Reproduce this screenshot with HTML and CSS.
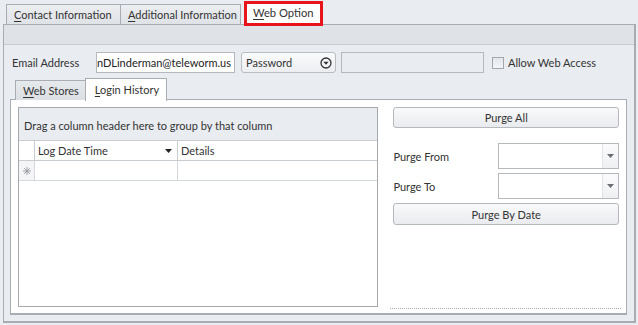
FILE: index.html
```html
<!DOCTYPE html>
<html>
<head>
<meta charset="utf-8">
<link rel="stylesheet" href="styles.css">
</head>
<body>
<div class="tabs">
  <div class="tab tab-contact"><u>C</u>ontact Information</div>
  <div class="tab tab-next"><u>A</u>dditional Information</div>
  <div class="tab tab-active"><u>W</u>eb Option</div>
</div>
<div class="panel">
  <div class="panel-head"></div>
  <div class="panel-body">
    <div class="email-row">
      <div class="lbl">Email Address</div>
      <div class="textbox"><span>nDLinderman@teleworm.us</span></div>
      <div class="combo">
        <span>Password</span>
        <svg width="12" height="12" viewBox="0 0 12 12"><circle cx="6" cy="6" r="5" fill="#f4f5f7" stroke="#333" stroke-width="1.3"/><path d="M3.3 4.8 L8.7 4.8 L6 7.8 Z" fill="#333"/></svg>
      </div>
      <div class="textbox disabled"></div>
      <div class="check"></div>
      <div class="check-lbl">Allow Web Access</div>
    </div>
    <div class="subtabs">
      <div class="subtab"><u>W</u>eb Stores</div>
      <div class="subtab subtab-active"><u>L</u>ogin History</div>
    </div>
    <div class="subpanel">
      <div class="grid">
        <div class="group-panel">Drag a column header here to group by that column</div>
        <div class="grid-row grid-head">
          <div class="cell ind"></div>
          <div class="cell c1">Log Date Time<svg class="sort" width="7" height="4" viewBox="0 0 7 4"><path d="M0 0 L7 0 L3.5 4 Z" fill="#222"/></svg></div>
          <div class="cell c2">Details</div>
        </div>
        <div class="grid-row grid-new">
          <div class="cell ind"><svg width="8" height="8" viewBox="0 0 8 8"><g stroke="#9a9ea4" stroke-width="1"><path d="M4 0 V8 M0 4 H8 M1.2 1.2 L6.8 6.8 M6.8 1.2 L1.2 6.8"/></g></svg></div>
          <div class="cell c1"></div>
          <div class="cell c2"></div>
        </div>
      </div>
      <div class="side">
        <div class="btn">Purge All</div>
        <div class="field-row first">
          <div class="field-lbl">Purge From</div>
          <div class="date-combo"><div class="dd"><svg width="7" height="4" viewBox="0 0 7 4"><path d="M0 0 L7 0 L3.5 4 Z" fill="#6a6e74"/></svg></div></div>
        </div>
        <div class="field-row">
          <div class="field-lbl">Purge To</div>
          <div class="date-combo"><div class="dd"><svg width="7" height="4" viewBox="0 0 7 4"><path d="M0 0 L7 0 L3.5 4 Z" fill="#6a6e74"/></svg></div></div>
        </div>
        <div class="btn btn2">Purge By Date</div>
        <div class="dotted"></div>
      </div>
    </div>
  </div>
</div>
</body>
</html>
```
FILE: styles.css
```css
* { box-sizing: border-box; }
body {
  margin: 0;
  width: 638px;
  height: 325px;
  overflow: hidden;
  background: #e9ecf0;
  font-family: Lato, "Noto Sans", sans-serif;
  font-size: 11px;
  color: #333;
}
u { text-decoration: underline; text-underline-offset: 2px; }

.tabs {
  display: flex;
  align-items: flex-end;
  height: 24px;
  padding-left: 6px;
  position: relative;
  z-index: 1;
}
.tab {
  height: 20px;
  line-height: 19px;
  padding: 0 0 0 7px;
  border: 1px solid #a9adb3;
  border-bottom: none;
  background: linear-gradient(#eceef1, #dfe2e6);
  color: #333;
  white-space: nowrap;
  overflow: hidden;
}
.tab-contact { width: 115px; }
.tab-next { margin-left: -1px; width: 121px; }
.tab-active {
  width: 79px;
  height: 25px;
  margin-left: 3px;
  margin-bottom: -2px;
  padding: 0 0 0 6px;
  line-height: 18px;
  font-size: 11.2px;
  border: 3px solid #e8141b;
  background: #fff;
}

.panel {
  margin-left: 3px;
  width: 633px;
  height: 299px;
  border: 1px solid #a9adb3;
  border-right-width: 2px;
  border-bottom-width: 2px;
}
.panel-head {
  height: 20px;
  background: #dfe2e7;
  border-bottom: 1px solid #c8ccd2;
}
.panel-body {
  padding: 7px 7px 0 6px;
}

.email-row {
  display: flex;
  align-items: center;
  height: 21px;
  padding-left: 2px;
}
.lbl { width: 84px; }
.textbox {
  width: 139px;
  height: 21px;
  border: 1px solid #b5b9bf;
  background: #fff;
  display: flex;
  justify-content: flex-end;
  align-items: center;
  overflow: hidden;
  padding-right: 3px;
  white-space: nowrap;
  color: #222;
}
.textbox.disabled {
  width: 143px;
  margin-left: 5px;
  background: #e9ecf0;
}
.combo {
  width: 95px;
  height: 21px;
  margin-left: 6px;
  border: 1px solid #b9bdc2;
  border-radius: 3px;
  background: linear-gradient(#fafbfc, #eceef1);
  display: flex;
  align-items: center;
  justify-content: space-between;
  padding: 0 3px 0 4px;
}
.check {
  width: 12px;
  height: 12px;
  margin-left: 8px;
  border: 1px solid #a3a7ad;
  background: linear-gradient(#e4e6e9, #f4f5f7);
}
.check-lbl { margin-left: 4px; }

.subtabs {
  display: flex;
  align-items: flex-end;
  height: 22px;
  margin-top: 5px;
  padding-left: 5px;
  position: relative;
  z-index: 1;
}
.subtab {
  height: 20px;
  line-height: 19px;
  padding: 0 6px 0 7px;
  border: 1px solid #a9adb3;
  border-bottom: none;
  background: linear-gradient(#e6e9ec, #dcdfe3);
  white-space: nowrap;
}
.subtab-active {
  height: 23px;
  margin-left: -1px;
  margin-bottom: -1px;
  line-height: 21px;
  padding: 0 7px 0 9px;
  background: #fff;
}

.subpanel {
  margin-top: -1px;
  height: 216px;
  border: 1px solid #a9adb3;
  border-bottom-width: 2px;
  background: #fff;
  display: flex;
  padding: 7px 7px 6px 7px;
}

.grid {
  width: 361px;
  height: 200px;
  border: 1px solid #a5a9ae;
  display: flex;
  flex-direction: column;
}
.group-panel {
  height: 33px;
  background: #e9ecf0;
  border-bottom: 1px solid #c9ccd1;
  padding-left: 5px;
  display: flex;
  align-items: center;
  padding-top: 2px;
}
.grid-row {
  display: flex;
  height: 20px;
  border-bottom: 1px solid #d5d8dc;
}
.grid-head { border-bottom-color: #c9ccd1; }
.cell {
  height: 100%;
  display: flex;
  align-items: center;
  border-right: 1px solid #d5d8dc;
}
.ind {
  width: 16px;
  background: #f4f5f7;
  justify-content: center;
}
.grid-head .ind { background: #fff; }
.c1 {
  width: 143px;
  padding-left: 3px;
  justify-content: space-between;
  padding-right: 5px;
}
.c2 {
  flex: 1;
  padding-left: 3px;
  border-right: none;
}
.grid-head .c1, .grid-head .ind { border-right-color: #c9ccd1; }

.side {
  width: 226px;
  margin-left: 15px;
  display: flex;
  flex-direction: column;
}
.btn {
  height: 21px;
  border: 1px solid #b5b9be;
  border-radius: 3px;
  background: linear-gradient(#f8f9fa, #e9ebee);
  display: flex;
  align-items: center;
  justify-content: center;
  color: #333;
}
.btn2 { height: 22px; margin-top: 4px; }
.field-row {
  display: flex;
  align-items: center;
  justify-content: space-between;
  margin-top: 4px;
}
.field-row.first { margin-top: 15px; }
.date-combo {
  width: 121px;
  height: 26px;
  border: 1px solid #b5b9be;
  display: flex;
  justify-content: flex-end;
}
.dd {
  width: 16px;
  height: 100%;
  border-left: 1px solid #e2e4e7;
  background: linear-gradient(#fbfbfc, #eef0f2);
  display: flex;
  align-items: center;
  justify-content: center;
}
.dotted {
  margin: auto -2px -2px -3px;
  height: 1px;
  border-top: 1px dotted #a5a9ae;
}
```
